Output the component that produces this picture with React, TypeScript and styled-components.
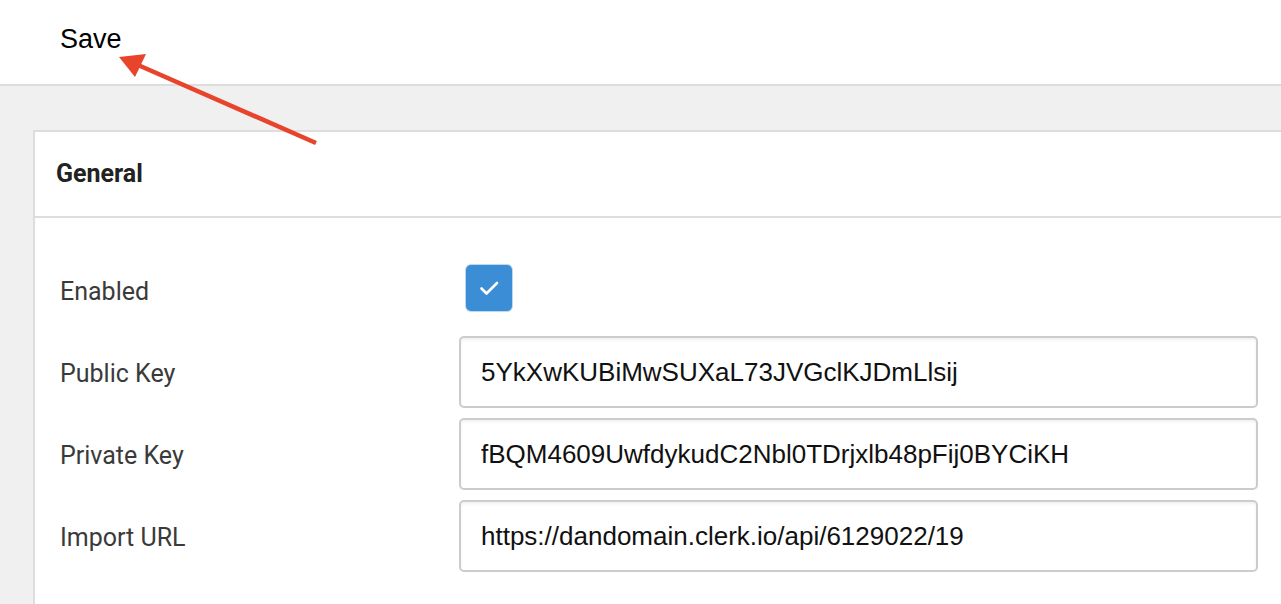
import styled, { createGlobalStyle } from "styled-components";

const GlobalStyle = createGlobalStyle`
  html, body {
    margin: 0;
    padding: 0;
    background: #f0f0f0;
    overflow: hidden;
  }
  * {
    box-sizing: border-box;
  }
`;

const Page = styled.div`
  position: relative;
  width: 1281px;
  height: 604px;
  overflow: hidden;
  background: #f0f0f0;
`;

const TopBar = styled.div`
  height: 86px;
  background: #fff;
  border-bottom: 2px solid #dddddd;
  display: flex;
  align-items: center;
  padding: 0 0 6px 60px;
`;

const SaveButton = styled.button`
  background: none;
  border: none;
  padding: 0;
  font-family: "Liberation Sans", Arial, sans-serif;
  font-size: 27px;
  color: #000;
  cursor: pointer;
`;

const Content = styled.div`
  padding: 44px 0 0 33px;
`;

const Card = styled.section`
  width: 1300px;
  min-height: 600px;
  background: #fff;
  border: 2px solid #dddddd;
  border-right: none;
`;

const CardHeader = styled.div`
  height: 86px;
  display: flex;
  align-items: center;
  padding: 0 0 2px 21px;
  border-bottom: 2px solid #dddddd;
  font-family: Roboto, "Noto Sans", sans-serif;
  font-weight: 700;
  font-size: 25px;
  color: #222;
`;

const CardBody = styled.div`
  padding: 36px 0 0 25px;
  display: flex;
  flex-direction: column;
  gap: 10px;
`;

const Row = styled.div`
  display: grid;
  grid-template-columns: 399px 799px;
  align-items: center;
  height: 72px;
`;

const Label = styled.label`
  font-family: Roboto, "Noto Sans", sans-serif;
  font-size: 25px;
  color: #3a3a3a;
  padding-top: 3px;
`;

const Checkbox = styled.div<{ checked: boolean }>`
  width: 46px;
  height: 46px;
  margin-left: 7px;
  margin-top: -4px;
  border-radius: 5px;
  background: ${(p) => (p.checked ? "#3b8ed6" : "#fff")};
  box-shadow: 0 0 0 1px rgba(59, 142, 214, 0.35);
  display: flex;
  align-items: center;
  justify-content: center;
`;

const TextInput = styled.input`
  width: 799px;
  height: 72px;
  border: 2px solid #cccccc;
  border-radius: 5px;
  box-shadow: inset 0 2px 3px rgba(0, 0, 0, 0.06);
  padding: 0 0 0 20px;
  font-family: "Liberation Sans", Arial, sans-serif;
  font-size: 26px;
  color: #111;
  background: #fff;
  outline: none;
`;

const Annotation = styled.svg`
  position: absolute;
  left: 0;
  top: 0;
  pointer-events: none;
`;

const fields = [
  { label: "Public Key", value: "5YkXwKUBiMwSUXaL73JVGclKJDmLlsij" },
  { label: "Private Key", value: "fBQM4609UwfdykudC2Nbl0TDrjxlb48pFij0BYCiKH" },
  { label: "Import URL", value: "https://dandomain.clerk.io/api/6129022/19" },
];

export default function App() {
  return (
    <Page>
      <GlobalStyle />
      <TopBar>
        <SaveButton>Save</SaveButton>
      </TopBar>
      <Content>
        <Card>
          <CardHeader>General</CardHeader>
          <CardBody>
            <Row>
              <Label>Enabled</Label>
              <Checkbox checked>
                <svg width="46" height="46" viewBox="0 0 46 46">
                  <path
                    d="M15.5 23.5 L20.5 28.5 L31 18"
                    fill="none"
                    stroke="#fff"
                    strokeWidth="2.6"
                    strokeLinecap="round"
                    strokeLinejoin="round"
                  />
                </svg>
              </Checkbox>
            </Row>
            {fields.map((f) => (
              <Row key={f.label}>
                <Label>{f.label}</Label>
                <TextInput defaultValue={f.value} readOnly />
              </Row>
            ))}
          </CardBody>
        </Card>
      </Content>
      <Annotation width="1281" height="604" viewBox="0 0 1281 604">
        <line x1="316" y1="143" x2="138" y2="65" stroke="#e8432b" strokeWidth="4.5" />
        <polygon points="119,57 146,54 135,77" fill="#e8432b" />
      </Annotation>
    </Page>
  );
}
